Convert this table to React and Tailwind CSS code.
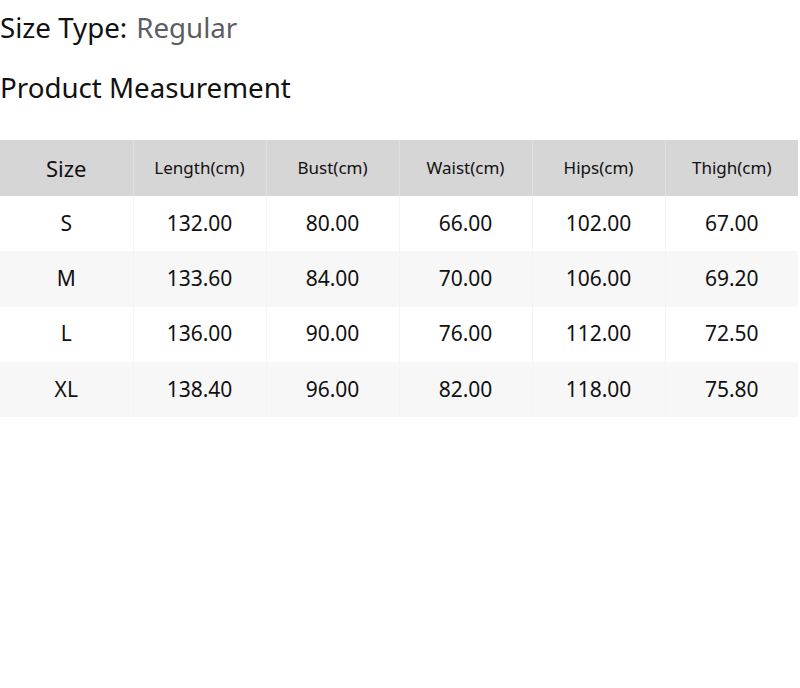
import React from 'react';

const headers = ['Length(cm)', 'Bust(cm)', 'Waist(cm)', 'Hips(cm)', 'Thigh(cm)'];

const rows = [
  ['S', '132.00', '80.00', '66.00', '102.00', '67.00'],
  ['M', '133.60', '84.00', '70.00', '106.00', '69.20'],
  ['L', '136.00', '90.00', '76.00', '112.00', '72.50'],
  ['XL', '138.40', '96.00', '82.00', '118.00', '75.80'],
];

const App = () => {
  return (
    <div className="w-[800px] h-[688px] bg-white text-[#111] font-['Noto_Sans',sans-serif]">
      <div className="h-[56px] flex items-center text-[27.7px]">
        <span>Size Type:</span>
        <span className="ml-[9px] text-[#5c5d63]">Regular</span>
      </div>
      <div className="h-[64px] flex items-center text-[27.7px]">Product Measurement</div>

      <table className="mt-[20px] w-[798px] table-fixed border-collapse text-center">
        <thead>
          <tr className="h-[56px] bg-[#d6d6d6]">
            <th className="font-normal text-[22px] border-r border-[#e0e0e0]">Size</th>
            {headers.map((h, i) => (
              <th
                key={h}
                className={`font-normal text-[17px] ${i < headers.length - 1 ? 'border-r border-[#e0e0e0]' : ''}`}
              >
                {h}
              </th>
            ))}
          </tr>
        </thead>
        <tbody>
          {rows.map((r, ri) => (
            <tr key={r[0]} className={`h-[55.3px] ${ri % 2 === 1 ? 'bg-[#f7f7f7]' : 'bg-white'}`}>
              {r.map((c, ci) => (
                <td
                  key={ci}
                  className={`text-[21px] ${ci < r.length - 1 ? 'border-r border-[#f4f4f4]' : ''}`}
                >
                  {c}
                </td>
              ))}
            </tr>
          ))}
        </tbody>
      </table>
    </div>
  );
};

export default App;
